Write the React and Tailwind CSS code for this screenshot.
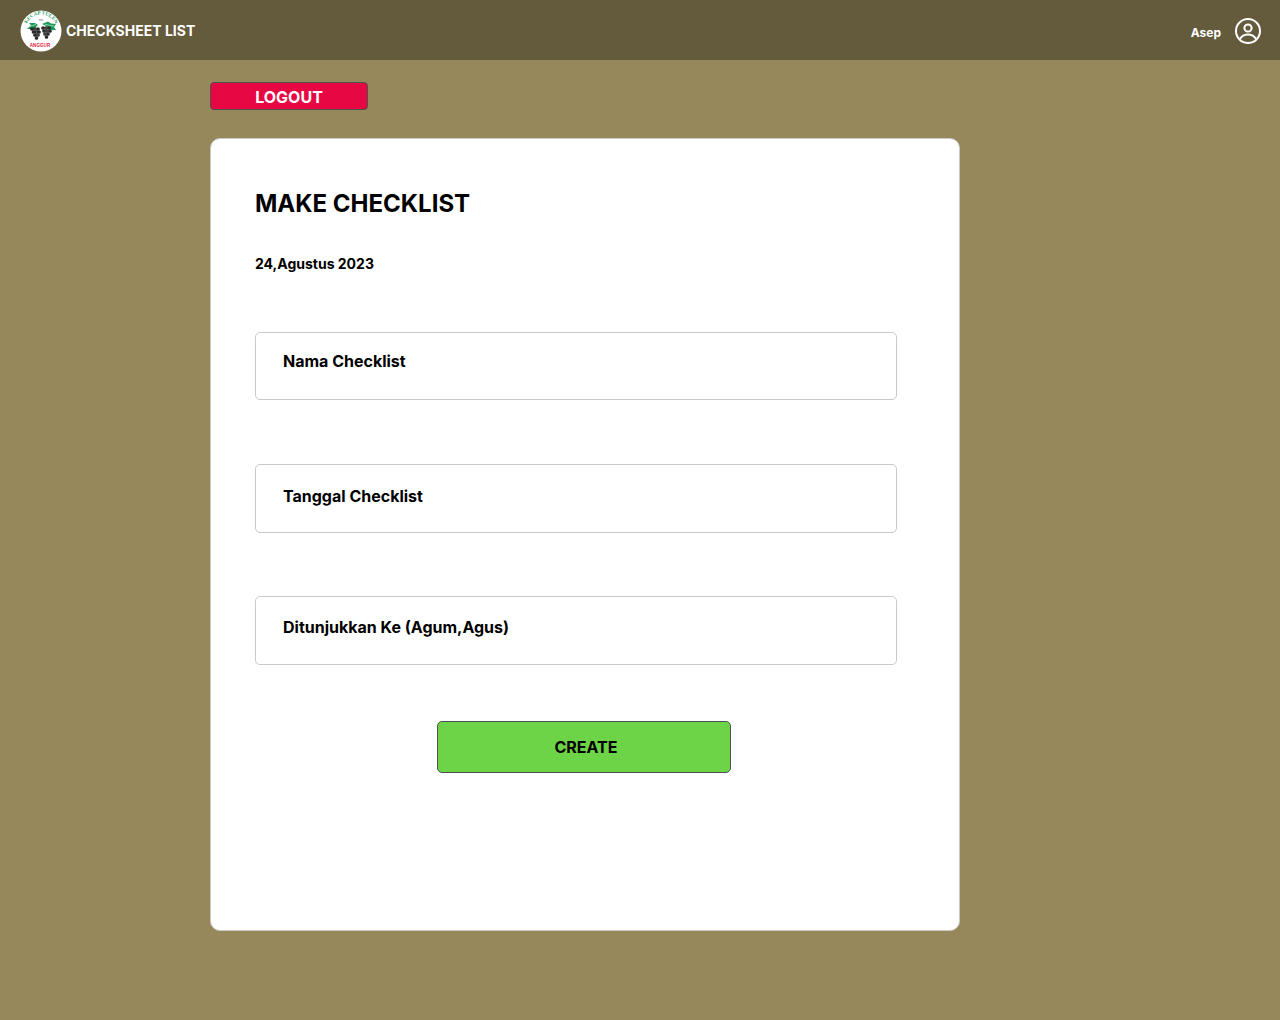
import React from "react";

const grapes = [
  [12, 19], [15, 19], [18, 19], [13.5, 22], [16.5, 22], [19, 22], [15, 25], [18, 25], [16.5, 28],
  [23, 18], [26, 18], [29, 18], [24, 21], [27, 21], [30, 21], [25, 24], [28, 24], [26.5, 27],
];

function Logo() {
  return (
    <svg width="42" height="42" viewBox="0 0 42 42" className="shrink-0">
      <circle cx="21" cy="21" r="20.5" fill="#fff" />
      <path id="arc" d="M5.5 20 A15.5 15.5 0 0 1 36.5 20" fill="none" />
      <text fontSize="5" fontWeight="800" fill="#1f9a5c" fontFamily="Liberation Serif, serif">
        <textPath href="#arc" startOffset="50%" textAnchor="middle">KECAP TULEN</textPath>
      </text>
      <rect x="19" y="9.5" width="4" height="1" fill="#888" />
      <path d="M7 19 L11 15 L9 13 L15 13 L18 15 L14 19 Z" fill="#1c9a57" />
      <path d="M22 14 L28 11.5 L31 13.5 L36 14 L34 17 L36 20 L31 20 L26 16 Z" fill="#1c9a57" />
      <path d="M8 17 L16 14.5 M25 14.5 L34 16" stroke="#fff" strokeWidth="0.5" />
      <g fill="#2a2a2a">
        {grapes.map(([x, y], i) => (
          <circle key={i} cx={x} cy={y} r="1.85" />
        ))}
      </g>
      <g fill="#8f8f8f">
        <circle cx="15" cy="19" r="0.55" /><circle cx="16.5" cy="22" r="0.55" /><circle cx="18" cy="25" r="0.55" />
        <circle cx="26" cy="18" r="0.55" /><circle cx="27" cy="21" r="0.55" /><circle cx="25" cy="24" r="0.55" />
      </g>
      <text x="20" y="36.5" textAnchor="middle" fontSize="4.6" fontWeight="800" fill="#e0263a" fontFamily="Liberation Sans, sans-serif">ANGGUR</text>
    </svg>
  );
}

function UserIcon() {
  return (
    <svg width="28" height="28" viewBox="0 0 28 28" fill="none" stroke="#fff" strokeWidth="2">
      <circle cx="14" cy="14" r="12" />
      <circle cx="14" cy="11" r="3.6" />
      <path d="M6 22 C8 18.6 11 17.6 14 17.6 C17 17.6 20 18.6 22 22" />
    </svg>
  );
}

function Field({ label, className, labelClass }) {
  return (
    <div className={`w-[642px] rounded-[5px] border border-[#c9c9c9] bg-white pl-[27px] ${className}`}>
      <div className={`text-base leading-[20px] font-bold text-black ${labelClass}`}>{label}</div>
    </div>
  );
}

export default function App() {
  return (
    <div className="min-h-[1020px] bg-[#96885a] font-['Inter',sans-serif]">
      <header className="flex h-[60px] items-center justify-between bg-[#645b3c] pt-[2px] pl-[20px] pr-[18px]">
        <div className="flex items-center gap-[4px]">
          <Logo />
          <span className="text-sm font-bold text-white">CHECKSHEET LIST</span>
        </div>
        <div className="flex items-center gap-[13px]">
          <span className="pt-[3px] text-xs font-bold text-white">Asep</span>
          <UserIcon />
        </div>
      </header>
      <main className="pl-[210px]">
        <button className="mt-[22px] block h-[28px] w-[158px] rounded-[4px] border border-[#4f4f4f] bg-[#e70843] pt-[1px] text-base font-bold text-white">
          LOGOUT
        </button>
        <section className="mt-[28px] flex h-[793px] w-[750px] flex-col rounded-[10px] border border-[#c9c9c9] bg-white pl-[44px]">
          <h1 className="mt-[50px] text-2xl leading-[30px] font-bold text-black">MAKE CHECKLIST</h1>
          <p className="mt-[36px] text-sm leading-[17px] font-bold text-black">24,Agustus 2023</p>
          <Field label="Nama Checklist" className="mt-[60px] h-[68px]" labelClass="pt-[18px]" />
          <Field label="Tanggal Checklist" className="mt-[64px] h-[69px]" labelClass="pt-[21px]" />
          <Field label="Ditunjukkan Ke (Agum,Agus)" className="mt-[63px] h-[69px]" labelClass="pt-[20px]" />
          <button className="mt-[56px] ml-[182px] h-[52px] w-[294px] rounded-[5px] border border-[#4f4f4f] bg-[#6dd447] pl-[4px] text-base font-bold text-black">
            CREATE
          </button>
        </section>
      </main>
    </div>
  );
}
